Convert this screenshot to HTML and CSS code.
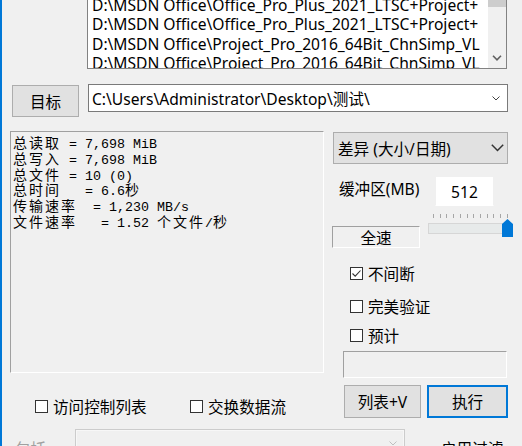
FILE: index.html
```html
<!DOCTYPE html>
<html>
<head>
<meta charset="utf-8">
<link rel="stylesheet" href="styles.css">
</head>
<body>
<div class="win">
  <div class="list">
    <div class="list-items">
      <div class="item">D:\MSDN Office\Office_Pro_Plus_2021_LTSC+Project+</div>
      <div class="item">D:\MSDN Office\Office_Pro_Plus_2021_LTSC+Project+</div>
      <div class="item">D:\MSDN Office\Office_Pro_Plus_2021_LTSC+Project+</div>
      <div class="item">D:\MSDN Office\Project_Pro_2016_64Bit_ChnSimp_VL</div>
      <div class="item">D:\MSDN Office\Project_Pro_2016_64Bit_ChnSimp_VL</div>
    </div>
    <div class="vscroll">
      <div class="thumb"></div>
      <div class="sb-down">
        <svg width="10" height="6" viewBox="0 0 10 6"><polyline points="1,0.8 5,4.8 9,0.8" fill="none" stroke="#606060" stroke-width="1.6"/></svg>
      </div>
    </div>
  </div>

  <div class="dest-row">
    <div class="btn btn-dest">目标</div>
    <div class="combo path">
      <span class="combo-text">C:\Users\Administrator\Desktop\测试\</span>
      <svg class="chev-s" width="8" height="5" viewBox="0 0 8 5"><polyline points="0.5,0.5 4,4 7.5,0.5" fill="none" stroke="#444" stroke-width="1"/></svg>
    </div>
  </div>

  <div class="main">
    <div class="left">
      <div class="stats">
        <div class="ln"><span class="c">总读取</span> = 7,698 MiB</div>
        <div class="ln"><span class="c">总写入</span> = 7,698 MiB</div>
        <div class="ln"><span class="c">总文件</span> = 10 (0)</div>
        <div class="ln"><span class="c">总时间</span>   = 6.6<span class="c">秒</span></div>
        <div class="ln"><span class="c">传输速率</span>  = 1,230 MB/s</div>
        <div class="ln"><span class="c">文件速率</span>   = 1.52 <span class="c">个文件</span>/<span class="c">秒</span></div>
      </div>
      <div class="opts">
        <label class="chk opt-acl"><span class="box"></span><span>访问控制列表</span></label>
        <label class="chk"><span class="box"></span><span>交换数据流</span></label>
      </div>
    </div>

    <div class="right">
      <div class="dropdown">
        <span>差异 (大小/日期)</span>
        <svg class="chev-l" width="13" height="8" viewBox="0 0 13 8"><polyline points="0.8,0.8 6.5,6.5 12.2,0.8" fill="none" stroke="#333" stroke-width="1.5"/></svg>
      </div>
      <div class="buf-row">
        <span class="buf-label">缓冲区(MB)</span>
        <div class="buf-input">512</div>
      </div>
      <div class="speed-row">
        <div class="static full">全速</div>
        <div class="slider">
          <div class="ticks">
            <i></i><i></i><i></i><i></i><i></i><i></i><i></i><i></i><i></i><i></i><i></i><i></i>
          </div>
          <div class="track">
            <svg class="thumb-s" width="11" height="18" viewBox="0 0 11 18"><polygon points="0,5 5.5,0 11,5 11,18 0,18" fill="#0078d7"/></svg>
          </div>
        </div>
      </div>
      <label class="chk rchk r1"><span class="box checked"><svg width="11" height="11" viewBox="0 0 11 11"><polyline points="1.5,5.5 4.2,8.2 9.5,2.5" fill="none" stroke="#333" stroke-width="1.1"/></svg></span><span>不间断</span></label>
      <label class="chk rchk r2"><span class="box"></span><span>完美验证</span></label>
      <label class="chk rchk r3"><span class="box"></span><span>预计</span></label>
      <div class="sunken"></div>
      <div class="btn-row">
        <div class="btn btn-list">列表+V</div>
        <div class="btn btn-run">执行</div>
      </div>
    </div>
  </div>

  <div class="bottom">
    <span class="inc-label">包括</span>
    <div class="combo disabled">
      <svg class="chev-s" width="8" height="5" viewBox="0 0 8 5"><polyline points="0.5,0.5 4,4 7.5,0.5" fill="none" stroke="#bfbfbf" stroke-width="1"/></svg>
    </div>
    <span class="filter-label">启用过滤</span>
  </div>
</div>
</body>
</html>
```

FILE: styles.css
```css
* { box-sizing: border-box; margin: 0; padding: 0; }
html, body { width: 522px; height: 446px; overflow: hidden; background: #f0f0f0; }
body {
  font-family: "Noto Sans", "Noto Sans CJK SC", sans-serif;
  font-size: 15.6px;
  color: #000;
}
.win {
  height: 446px;
  border-left: 2px solid #0078d7;
  overflow: hidden;
}

/* source list */
.list {
  margin: -25px 0 0 85px;
  width: 420px;
  height: 94px;
  border: 1px solid #828282;
  background: #fff;
  display: flex;
}
.list-items { flex: 1; overflow: hidden; padding-left: 4px; padding-right: 2px; }
.item {
  height: 19.5px;
  line-height: 19.5px;
  white-space: nowrap;
  overflow: hidden;
}
.vscroll {
  width: 18px;
  background: #f0f0f0;
  display: flex;
  flex-direction: column;
}
.thumb { height: 27px; margin-top: 4px; background: #cdcdcd; }
.sb-down {
  margin-top: auto;
  height: 20px;
  display: flex;
  align-items: center;
  justify-content: center;
}

/* destination */
.dest-row {
  display: flex;
  align-items: flex-start;
  margin-top: 15px;
}
.btn {
  background: #e1e1e1;
  border: 1px solid #adadad;
  display: flex;
  align-items: center;
  justify-content: center;
}
.btn-dest { margin: 1px 0 0 10px; width: 67px; height: 32px; }
.combo {
  display: flex;
  align-items: center;
  height: 28px;
  border: 1px solid #7a7a7a;
  background: #fff;
}
.path { margin-left: 9px; width: 420px; padding-left: 3px; }
.combo-text { flex: 1; white-space: nowrap; overflow: hidden; }
.chev-s { margin-left: auto; margin-right: 7px; flex: none; }

/* main area */
.main {
  display: grid;
  grid-template-columns: 314px 176px;
  column-gap: 8px;
  margin: 14px 0 0 8px;
}
.stats {
  height: 242px;
  border-top: 1px solid #a0a0a0;
  border-left: 1px solid #a0a0a0;
  border-right: 1px solid #fff;
  border-bottom: 1px solid #fff;
  padding: 3px 0 0 2px;
  font-family: "Liberation Mono", "Noto Sans CJK SC", monospace;
  font-size: 13.33px;
}
.ln { height: 15.8px; line-height: 15.8px; white-space: pre; overflow: visible; }
.c {
  font-family: "Noto Sans CJK SC", sans-serif;
  font-size: 14px;
  letter-spacing: 2px;
  line-height: 15.8px;
}
.opts {
  display: flex;
  margin: 24px 0 0 25px;
  height: 18px;
}
.opt-acl { width: 155px; }

.chk { display: flex; align-items: center; height: 18px; }
.box {
  width: 13px;
  height: 13px;
  border: 1px solid #333;
  background: #fff;
  margin-right: 5px;
  display: flex;
  align-items: center;
  justify-content: center;
  flex: none;
}

/* right column */
.right { display: flex; flex-direction: column; }
.dropdown {
  margin: 1px 0 0 1px;
  height: 32px;
  background: #e1e1e1;
  border: 1px solid #adadad;
  display: flex;
  align-items: center;
  padding-left: 4px;
}
.chev-l { margin-left: auto; margin-right: 3px; }
.buf-row {
  display: flex;
  align-items: center;
  margin-top: 12px;
  height: 30px;
}
.buf-label { margin-left: 7px; padding-bottom: 5px; }
.buf-input {
  margin-left: auto;
  margin-right: 14px;
  width: 59px;
  height: 30px;
  background: #fff;
  border: 1px solid #f0f0f0;
  border-bottom-color: #fff;
  display: flex;
  align-items: center;
  justify-content: center;
  padding-top: 1px;
}
.speed-row { display: flex; align-items: flex-start; margin-top: 8px; }
.static {
  border-top: 1px solid #a0a0a0;
  border-left: 1px solid #a0a0a0;
  border-right: 1px solid #fff;
  border-bottom: 1px solid #fff;
}
.full {
  margin-top: 12px;
  width: 88px;
  height: 22px;
  display: flex;
  align-items: center;
  justify-content: center;
  flex: none;
}
.slider { margin-left: 8px; width: 85px; flex: none; }
.ticks {
  display: flex;
  justify-content: space-between;
  margin-left: 5px;
  width: 75px;
  height: 4px;
}
.ticks i { width: 1px; height: 4px; background: #a6a6a6; }
.track {
  position: relative;
  margin-top: 5px;
  width: 77px;
  height: 11px;
  background: #e7eaea;
  border: 1px solid #d6d6d6;
}
.thumb-s { position: absolute; left: 73px; top: -5px; }

.rchk { margin-left: 18px; }
.r1 { margin-top: 16px; }
.r2 { margin-top: 15px; }
.r3 { margin-top: 11px; }
.sunken {
  margin: 7px 0 0 11px;
  width: 164px;
  height: 27px;
  border-top: 1px solid #a0a0a0;
  border-left: 1px solid #a0a0a0;
  border-right: 1px solid #fff;
  border-bottom: 1px solid #fff;
}
.btn-row { display: flex; margin: 7px 0 0 12px; gap: 6px; }
.btn-list { width: 77px; height: 33px; }
.btn-run { width: 81px; height: 33px; border: 2px solid #0078d7; }

/* bottom */
.bottom {
  display: flex;
  align-items: flex-start;
  margin-top: 11px;
}
.inc-label { margin: 8px 0 0 13px; width: 31px; color: #a0a0a0; white-space: nowrap; }
.disabled {
  margin-left: 29px;
  width: 330px;
  border-color: #cccccc;
  background: #f0f0f0;
  box-shadow: inset 0 0 0 1px #f7f7f7;
}
.filter-label { margin: 8px 0 0 36px; white-space: nowrap; }
```
